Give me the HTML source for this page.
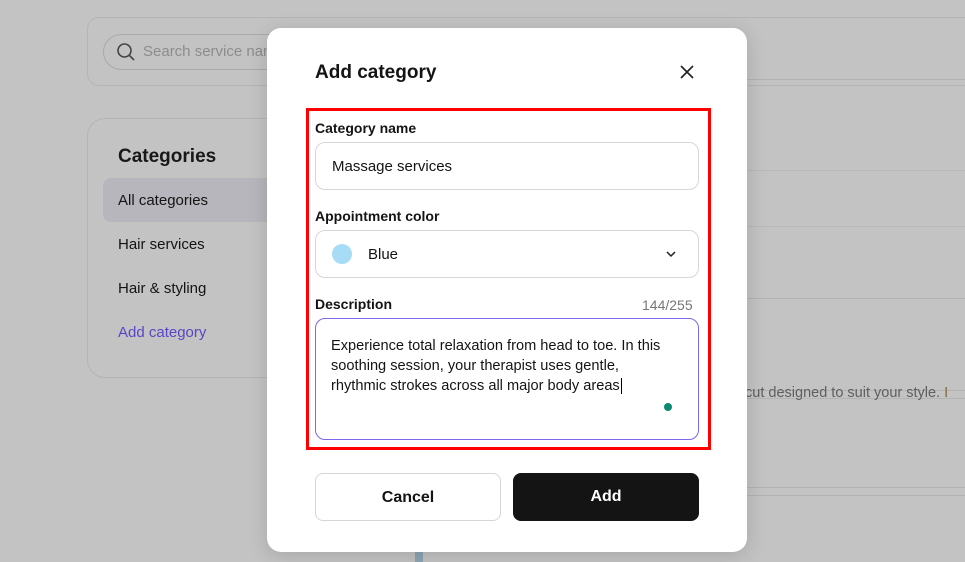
<!DOCTYPE html>
<html><head><style>
*{box-sizing:border-box;margin:0;padding:0}
body{width:965px;height:562px;background:#c3c3c3;font-family:"Liberation Sans",sans-serif;position:relative;overflow:hidden;color:#141414}
.a{position:absolute}
.line{position:absolute;left:700px;right:0;height:1px;background:#b3b3b3}
</style></head><body>
<div class="a" style="left:87px;top:17px;width:900px;height:69px;border:1px solid #b5b5b5;border-radius:12px"></div>
<div class="a" style="left:103px;top:34px;width:300px;height:36px;border:1px solid #a9a9a9;border-radius:18px"></div>
<svg class="a" style="left:116px;top:42px" width="20" height="20" viewBox="0 0 20 20"><circle cx="8.5" cy="8.5" r="6.5" fill="none" stroke="#444" stroke-width="1.6"/><path d="M13.3 13.3L18 18" stroke="#444" stroke-width="1.6"/></svg>
<div class="a" style="left:143px;top:43px;font-size:15px;color:#8c8c8c">Search service name</div>
<div class="a" style="left:87px;top:118px;width:300px;height:260px;border:1px solid #b5b5b5;border-radius:18px"></div>
<div class="a" style="left:118px;top:146px;font-size:19px;font-weight:bold;color:#181818">Categories</div>
<div class="a" style="left:103px;top:178px;width:200px;height:44px;background:#b6b6bc;border-radius:8px"></div>
<div class="a" style="left:118px;top:192px;font-size:15px">All categories</div>
<div class="a" style="left:118px;top:236px;font-size:15px">Hair services</div>
<div class="a" style="left:118px;top:280px;font-size:15px">Hair &amp; styling</div>
<div class="a" style="left:118px;top:324px;font-size:15px;color:#5b45c6">Add category</div>
<div class="line" style="top:79px"></div>
<div class="line" style="top:170px;background:#b8b8b8"></div>
<div class="line" style="top:226px;background:#b8b8b8"></div>
<div class="line" style="top:298px"></div>
<div class="line" style="top:390px"></div>
<div class="line" style="top:398px"></div>
<div class="line" style="top:487px"></div>
<div class="line" style="top:495px"></div>
<div class="a" style="left:737px;top:385px;font-size:14.5px;color:#5f5f5f;white-space:nowrap">ircut designed to suit your style. <span style="color:#8a6a3a">I</span></div>
<div class="a" style="left:415px;top:550px;width:8px;height:12px;background:#8ea5b2"></div>

<div class="a" style="left:267px;top:28px;width:480px;height:524px;background:#fff;border-radius:14px;box-shadow:0 4px 20px rgba(0,0,0,.15)"></div>
<div class="a" style="left:315px;top:62px;font-size:19px;font-weight:bold">Add category</div>
<svg class="a" style="left:679px;top:64px" width="16" height="16" viewBox="0 0 16 16"><path d="M2 2L14 14M14 2L2 14" stroke="#222" stroke-width="1.7"/></svg>
<div class="a" style="left:306px;top:108px;width:405px;height:342px;border:3px solid #f00"></div>
<div class="a" style="left:315px;top:120px;font-size:14px;font-weight:bold">Category name</div>
<div class="a" style="left:315px;top:142px;width:384px;height:48px;border:1px solid #d6d6d6;border-radius:10px"></div>
<div class="a" style="left:332px;top:158px;font-size:15px">Massage services</div>
<div class="a" style="left:315px;top:208px;font-size:14px;font-weight:bold">Appointment color</div>
<div class="a" style="left:315px;top:230px;width:384px;height:48px;border:1px solid #d6d6d6;border-radius:10px"></div>
<div class="a" style="left:332px;top:244px;width:20px;height:20px;border-radius:50%;background:#a7dcf7"></div>
<div class="a" style="left:368px;top:246px;font-size:15px">Blue</div>
<svg class="a" style="left:665px;top:249px" width="12" height="10" viewBox="0 0 12 10"><path d="M2 3L6 7L10 3" fill="none" stroke="#222" stroke-width="1.5"/></svg>
<div class="a" style="left:315px;top:296px;font-size:14px;font-weight:bold">Description</div>
<div class="a" style="left:642px;top:297px;font-size:14px;color:#777">144/255</div>
<div class="a" style="left:315px;top:318px;width:384px;height:122px;border:1px solid #7b68ee;border-radius:10px"></div>
<div class="a" style="left:331px;top:336px;font-size:14.6px;line-height:20px;width:342px">Experience total relaxation from head to toe. In this soothing session, your therapist uses gentle, rhythmic strokes across all major body areas<span style="border-left:1px solid #000;margin-left:1px"></span></div>
<div class="a" style="left:664px;top:403px;width:8px;height:8px;border-radius:50%;background:#0f8a72"></div>
<div class="a" style="left:315px;top:473px;width:186px;height:48px;border:1px solid #d6d6d6;border-radius:8px;font-size:16px;font-weight:bold;text-align:center;line-height:47px">Cancel</div>
<div class="a" style="left:513px;top:473px;width:186px;height:48px;background:#141414;border-radius:8px;color:#fff;font-size:16px;font-weight:bold;text-align:center;line-height:48px">Add</div>
</body></html>
